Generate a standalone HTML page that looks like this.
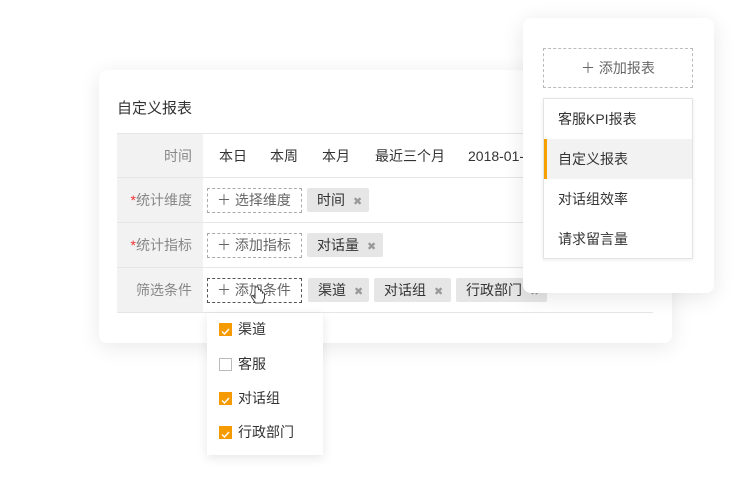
<!DOCTYPE html>
<html><head><meta charset="utf-8"><style>
*{margin:0;padding:0;box-sizing:border-box}
body{width:746px;height:500px;background:#fff;position:relative;overflow:hidden;font-family:"Liberation Sans","Noto Sans CJK SC",sans-serif;font-size:14px;color:#333}
.card{position:absolute;left:99px;top:70px;width:573px;height:273px;background:#fff;border-radius:8px;box-shadow:0 4px 22px rgba(0,0,0,.09)}
.title{position:absolute;left:117px;top:97px;font-size:15px;color:#333}
.row{position:absolute;left:117px;width:536px;height:45px;border-bottom:1px solid #e6e6e6}
.lab{position:absolute;left:0;top:0;width:86px;height:100%;background:#f2f2f2;color:#888;text-align:right;padding-right:11px;line-height:44px}
.lab b{color:#e33;font-weight:normal}
.t{position:absolute;top:0;line-height:44px;color:#333}
.btn{position:absolute;top:10px;height:25px;border:1px dashed #aaa;color:#666;line-height:23px;padding-left:9px;width:95px}
.btn.dark{border-color:#555}
.tag{position:absolute;top:10px;height:24px;background:#e6e6e6;border-radius:2px;line-height:24px;padding-left:10px;color:#333}
.tag i{font-style:normal;color:#999;font-size:11px;margin-left:8px}
.rc{position:absolute;left:523px;top:18px;width:191px;height:275px;background:#fff;border-radius:8px;box-shadow:0 4px 22px rgba(0,0,0,.1)}
.add{position:absolute;left:543px;top:48px;width:150px;height:40px;border:1px dashed #bbb;color:#666;text-align:center;line-height:38px}
.list{position:absolute;left:543px;top:98px;width:150px;height:161px;background:#fff;border:1px solid #e4e4e4;box-shadow:0 1px 4px rgba(0,0,0,.08)}
.li{height:40px;line-height:40px;padding-left:14px;color:#333}
.li.sel{background:#f2f2f2;border-left:3px solid #f5a000;padding-left:11px}
.dd{position:absolute;left:207px;top:313px;width:116px;height:142px;background:#fff;box-shadow:0 3px 10px rgba(0,0,0,.1)}
.ck{position:absolute;left:12px;width:13px;height:13px;border:1px solid #bbb;background:#fff}
.ck.on{background:#f59a00;border-color:#f59a00}
.dl{position:absolute;left:31px;color:#333;line-height:20px}
</style></head><body>
<div class="card"></div>
<div class="title">自定义报表</div>
<div class="row" style="top:133px;border-top:1px solid #e6e6e6"><div class="lab">时间</div>
<span class="t" style="left:102px">本日</span><span class="t" style="left:153px">本周</span><span class="t" style="left:205px">本月</span><span class="t" style="left:258px">最近三个月</span><span class="t" style="left:351px">2018-01-</span></div>
<div class="row" style="top:178px"><div class="lab"><b>*</b>统计维度</div>
<div class="btn" style="left:90px">＋ 选择维度</div><div class="tag" style="left:190px;width:62px">时间<i>✖</i></div></div>
<div class="row" style="top:223px"><div class="lab"><b>*</b>统计指标</div>
<div class="btn" style="left:90px">＋ 添加指标</div><div class="tag" style="left:190px;width:76px">对话量<i>✖</i></div></div>
<div class="row" style="top:268px"><div class="lab">筛选条件</div>
<div class="btn dark" style="left:90px">＋ 添加条件</div><div class="tag" style="left:191px;width:61px">渠道<i>✖</i></div><div class="tag" style="left:257px;width:77px">对话组<i>✖</i></div><div class="tag" style="left:339px;width:91px">行政部门<i>✖</i></div></div>
<svg style="position:absolute;left:250px;top:286px" width="18" height="22" viewBox="0 0 18 22"><path d="M5 2v10l-2-2c-1-1-2 0-1.5 1l4 6h7l2-5v-4c0-1-1-1.5-2-1v-1c0-1-1-1.5-2-1v-0.5c0-1-1-1.5-2-1V2c0-1.5-3.5-1.5-3.5 0z" fill="#fff" stroke="#444" stroke-width="1"/></svg>
<div class="dd">
<div class="ck on" style="top:10px"><svg width="11" height="11"><path d="M2 5.5l2.5 2.5 4.5-5" stroke="#fff" stroke-width="1.4" fill="none"/></svg></div><div class="dl" style="top:6px">渠道</div>
<div class="ck" style="top:45px"></div><div class="dl" style="top:41px">客服</div>
<div class="ck on" style="top:79px"><svg width="11" height="11"><path d="M2 5.5l2.5 2.5 4.5-5" stroke="#fff" stroke-width="1.4" fill="none"/></svg></div><div class="dl" style="top:75px">对话组</div>
<div class="ck on" style="top:113px"><svg width="11" height="11"><path d="M2 5.5l2.5 2.5 4.5-5" stroke="#fff" stroke-width="1.4" fill="none"/></svg></div><div class="dl" style="top:109px">行政部门</div>
</div>
<div class="rc"></div>
<div class="add">＋ 添加报表</div>
<div class="list"><div class="li">客服KPI报表</div><div class="li sel">自定义报表</div><div class="li">对话组效率</div><div class="li">请求留言量</div></div>
</body></html>
